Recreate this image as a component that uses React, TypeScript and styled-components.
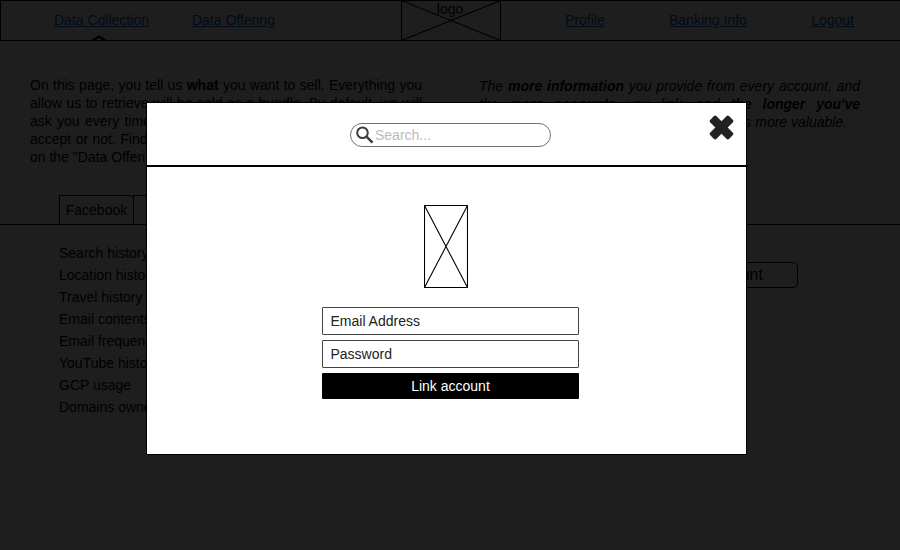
import React from "react";
import styled, { createGlobalStyle } from "styled-components";

const GlobalStyle = createGlobalStyle`
  *, *::before, *::after { box-sizing: border-box; }
  body { margin: 0; background: #fff; overflow: hidden; }
  body, button, input { font-family: "Liberation Sans", Arial, sans-serif; font-size: 14px; }
`;

const Page = styled.div`
  position: relative;
  width: 900px;
  height: 550px;
  overflow: hidden;
  color: #000;
  background: #fff;
`;

const Header = styled.header`
  display: grid;
  grid-template-columns: 400px 100px 1fr;
  height: 41px;
  border: 1px solid #000;
  border-right: 0;
  overflow: hidden;
`;

const NavGroup = styled.nav<{ $start: number; $gap: number }>`
  display: flex;
  align-items: center;
  gap: ${(p) => p.$gap}px;
  padding: 0 0 2px ${(p) => p.$start}px;
  white-space: nowrap;
`;

const NavLink = styled.a`
  position: relative;
  color: #0066cc;
  text-decoration: underline;
`;

const Caret = styled.svg`
  position: absolute;
  left: 37px;
  top: 22px;
`;

const Logo = styled.div`
  display: grid;
  margin: -1px 0 -1px 0;
  > * { grid-area: 1 / 1; }
`;

const LogoLabel = styled.span`
  justify-self: center;
  line-height: 18px;
  margin-left: -2px;
`;

const Intro = styled.section`
  display: grid;
  grid-template-columns: 392px 381px;
  column-gap: 57px;
  padding: 35px 0 0 30px;
  height: 154px;
  line-height: 18px;
`;

const Copy = styled.div<{ $italic?: boolean }>`
  font-style: ${(p) => (p.$italic ? "italic" : "normal")};
  padding-top: ${(p) => (p.$italic ? 1 : 0)}px;
`;

const Line = styled.div<{ $spacing?: number }>`
  white-space: ${(p) => (p.$spacing === undefined ? "normal" : "nowrap")};
  word-spacing: ${(p) => p.$spacing ?? 0}px;
  text-align: left;
  text-align-last: ${(p) => (p.$spacing === undefined ? "justify" : "left")};
`;

const Tabs = styled.div`
  display: flex;
  height: 30px;
  padding-left: 59px;
  border-bottom: 1px solid #000;
`;

const Tab = styled.div`
  width: 75px;
  margin-right: -1px;
  border: 1px solid #000;
  border-bottom: 0;
  border-radius: 0 5px 0 0;
  line-height: 29px;
  text-align: center;
`;

const Content = styled.main`
  display: flex;
  justify-content: space-between;
  align-items: flex-start;
  padding: 17px 102px 0 59px;
`;

const DataList = styled.ul`
  list-style: none;
  margin: 0;
  padding: 0;
  line-height: 22px;
`;

const OutlineButton = styled.button`
  margin-top: 20px;
  width: 160px;
  height: 26px;
  padding: 0;
  border: 1px solid #000;
  border-radius: 5px;
  background: transparent;
  color: #000;
  font-size: 16px;
`;

const Overlay = styled.div`
  position: absolute;
  inset: 0;
  padding: 102px 0 0 146px;
  background: rgba(0, 0, 0, 0.882);
`;

const Modal = styled.div`
  width: 601px;
  height: 353px;
  border: 1px solid #000;
  background: #fff;
`;

const ModalHeader = styled.div`
  display: flex;
  justify-content: space-between;
  align-items: flex-start;
  width: 602px;
  height: 64px;
  margin-left: -1px;
  padding: 0 14.5px 0 204px;
  border-bottom: 2px solid #000;
`;

const SearchBox = styled.label`
  display: flex;
  align-items: center;
  width: 201px;
  height: 24px;
  margin-top: 20px;
  padding-left: 5px;
  border: 1px solid #707070;
  border-radius: 12px;
`;

const SearchInput = styled.input`
  width: 160px;
  height: 20px;
  margin-left: 1px;
  padding: 0;
  border: 0;
  outline: 0;
  background: transparent;
  &::placeholder { color: #bbb; opacity: 1; }
`;

const CloseButton = styled.button`
  margin-top: 12px;
  padding: 0;
  border: 0;
  background: none;
  line-height: 0;
`;

const Form = styled.form`
  display: flex;
  flex-direction: column;
  width: 257px;
  margin: 38px 0 0 175px;
  gap: 5px;
`;

const Picture = styled.svg`
  margin: 0 0 14px 102px;
`;

const Field = styled.input`
  height: 28px;
  padding: 0 0 0 7.5px;
  border: 1px solid #444;
  border-radius: 1px;
  background: #fff;
  &::placeholder { color: #222; opacity: 1; }
`;

const SubmitButton = styled.button`
  height: 26px;
  padding: 0;
  border: 0;
  border-radius: 1px;
  background: #000;
  color: #fff;
`;

const dataTypes = [
  "Search history",
  "Location history",
  "Travel history",
  "Email contents",
  "Email frequency",
  "YouTube history",
  "GCP usage",
  "Domains owned",
];

export default function App() {
  return (
    <Page>
      <GlobalStyle />
      <Header>
        <NavGroup $start={53} $gap={43}>
          <NavLink>
            Data Collection
            <Caret width="16" height="8" viewBox="0 0 16 8">
              <path d="M1 7 8 2.6 15 7" fill="none" stroke="#000" strokeWidth="2.4" />
            </Caret>
          </NavLink>
          <NavLink>Data Offering</NavLink>
        </NavGroup>
        <Logo>
          <svg width="100" height="41" viewBox="0 0 100 41">
            <path d="M.5.5h99v40H.5zL99.5 40.5M99.5.5.5 40.5" fill="none" stroke="#000" strokeWidth="1.1" />
          </svg>
          <LogoLabel>logo</LogoLabel>
        </Logo>
        <NavGroup $start={64} $gap={64.3}>
          <NavLink>Profile</NavLink>
          <NavLink>Banking Info</NavLink>
          <NavLink>Logout</NavLink>
        </NavGroup>
      </Header>
      <Intro>
        <Copy>
          <Line>On this page, you tell us <b>what</b> you want to sell. Everything you</Line>
          <Line>allow us to retrieve will be sold as a bundle. By default, we will</Line>
          <Line $spacing={1.4}>ask you every time there is an offer, and you can</Line>
          <Line $spacing={0.5}>accept or not. Find the offers and your settings</Line>
          <Line $spacing={0}>on the "Data Offering" page.</Line>
        </Copy>
        <Copy $italic>
          <Line>The <b>more information</b> you provide from every account, and</Line>
          <Line>the <b>more accounts</b> you link, and <b>the longer you've</b></Line>
          <Line $spacing={0}><b>had them</b> too, your complete data bundle is more valuable.</Line>
        </Copy>
      </Intro>
      <Tabs>
        <Tab>Facebook</Tab>
        <Tab>Google</Tab>
      </Tabs>
      <Content>
        <DataList>
          {dataTypes.map((name) => <li key={name}>{name}</li>)}
        </DataList>
        <OutlineButton>Link account</OutlineButton>
      </Content>
      <Overlay>
        <Modal role="dialog">
          <ModalHeader>
            <SearchBox>
              <svg width="18" height="18" viewBox="0 0 18 18" fill="none" stroke="#3c3c3c">
                <circle cx="6.5" cy="6.7" r="5.3" strokeWidth="2" />
                <path d="m10.5 10.7 6 6" strokeWidth="2.5" />
              </svg>
              <SearchInput placeholder="Search..." />
            </SearchBox>
            <CloseButton aria-label="Close">
              <svg width="25" height="25" viewBox="0 0 25 25" fill="#222">
                <g transform="rotate(45 12.5 12.5)">
                  <rect x="-0.9" y="8.1" width="26.8" height="8.8" rx="2" />
                  <rect x="8.1" y="-0.9" width="8.8" height="26.8" rx="2" />
                </g>
              </svg>
            </CloseButton>
          </ModalHeader>
          <Form>
            <Picture width="44" height="83" viewBox="0 0 44 83">
              <path d="M.5.5h43v82H.5zL43.5 82.5M43.5.5.5 82.5" fill="none" stroke="#000" strokeWidth="1.1" />
            </Picture>
            <Field placeholder="Email Address" />
            <Field placeholder="Password" />
            <SubmitButton type="button">Link account</SubmitButton>
          </Form>
        </Modal>
      </Overlay>
    </Page>
  );
}
